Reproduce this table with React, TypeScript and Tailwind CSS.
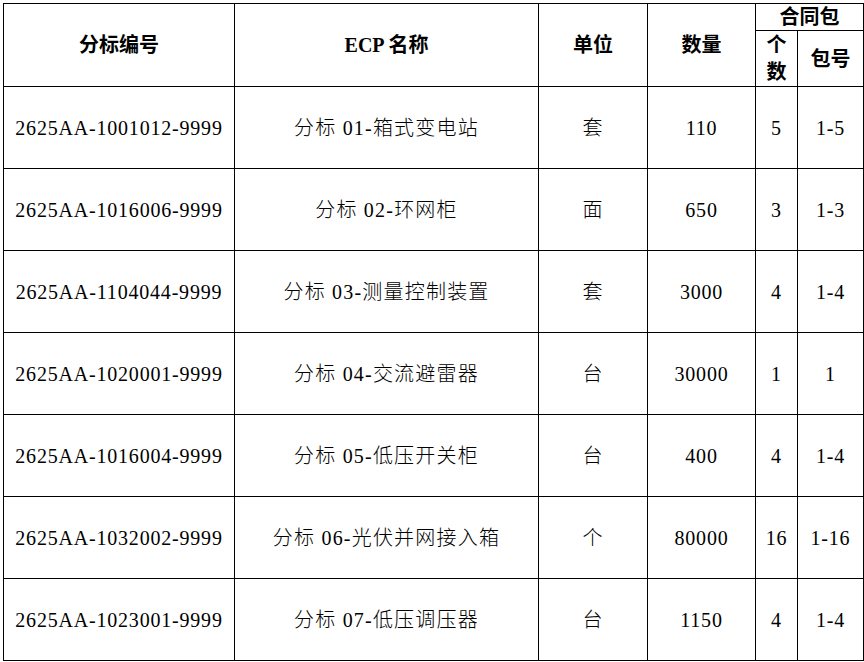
const rows = [
  ["2625AA-1001012-9999", "分标 01-箱式变电站", "套", "110", "5", "1-5"],
  ["2625AA-1016006-9999", "分标 02-环网柜", "面", "650", "3", "1-3"],
  ["2625AA-1104044-9999", "分标 03-测量控制装置", "套", "3000", "4", "1-4"],
  ["2625AA-1020001-9999", "分标 04-交流避雷器", "台", "30000", "1", "1"],
  ["2625AA-1016004-9999", "分标 05-低压开关柜", "台", "400", "4", "1-4"],
  ["2625AA-1032002-9999", "分标 06-光伏并网接入箱", "个", "80000", "16", "1-16"],
  ["2625AA-1023001-9999", "分标 07-低压调压器", "台", "1150", "4", "1-4"],
];

const font = "font-['Liberation_Serif','Noto_Sans_CJK_SC',serif]";

export default function App() {
  return (
    <div className={`bg-white w-[864px] h-[662px] overflow-hidden pl-[3px] pt-[3px] text-black ${font}`}>
      <table className="table-fixed border-collapse w-[860px]">
        <colgroup>
          <col className="w-[231px]" />
          <col className="w-[304px]" />
          <col className="w-[109px]" />
          <col className="w-[108px]" />
          <col className="w-[42px]" />
          <col className="w-[66px]" />
        </colgroup>
        <thead>
          <tr className="h-[27px]">
            <th rowSpan={2} className="border border-black text-[20px] font-bold p-0">分标编号</th>
            <th rowSpan={2} className="border border-black text-[20px] font-bold p-0">ECP 名称</th>
            <th rowSpan={2} className="border border-black text-[20px] font-bold p-0">单位</th>
            <th rowSpan={2} className="border border-black text-[20px] font-bold p-0">数量</th>
            <th colSpan={2} className="border border-black text-[20px] font-bold p-0 leading-[26px]">合同包</th>
          </tr>
          <tr className="h-[56px]">
            <th className="border border-black text-[20px] font-bold p-0 leading-[27px]">个<br />数</th>
            <th className="border border-black text-[20px] font-bold p-0">包号</th>
          </tr>
        </thead>
        <tbody>
          {rows.map((r) => (
            <tr key={r[0]} className="h-[82px]">
              {r.map((c, i) => (
                <td
                  key={i}
                  className={`border border-black p-0 text-[20px] text-center font-light ${i === 1 ? "tracking-[1.2px]" : "tracking-[0.8px]"}`}
                >
                  {c}
                </td>
              ))}
            </tr>
          ))}
        </tbody>
      </table>
    </div>
  );
}
